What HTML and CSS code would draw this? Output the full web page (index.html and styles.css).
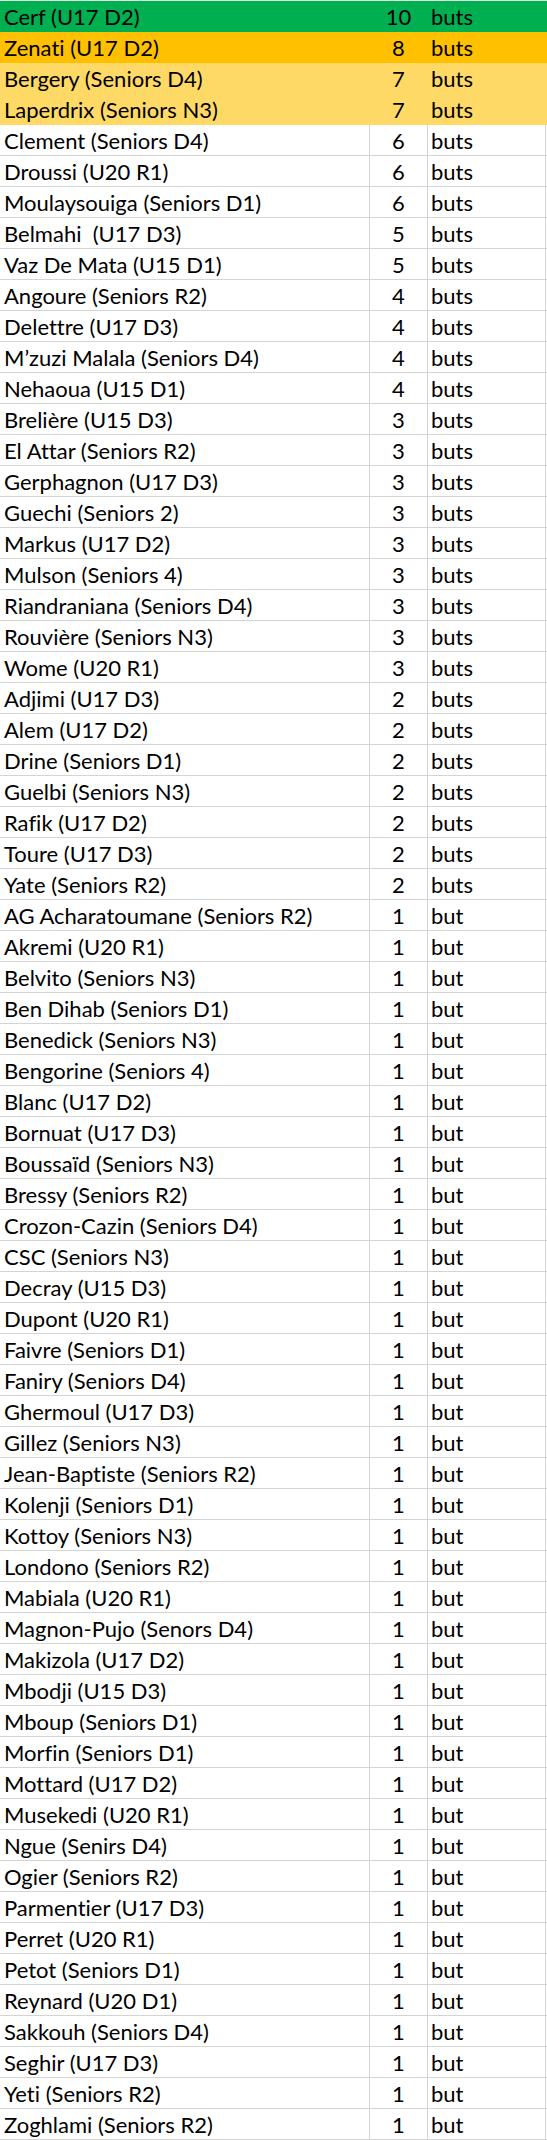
FILE: index.html
```html
<!DOCTYPE html>
<html lang="fr">
<head>
<meta charset="utf-8">
<title>Buteurs</title>
<link rel="stylesheet" href="styles.css">
</head>
<body>
<div class="sheet">
  <div class="row green"><div class="c name">Cerf (U17 D2)</div><div class="c num">10</div><div class="c unit">buts</div><div class="c rest"></div></div>
  <div class="row orange"><div class="c name">Zenati (U17 D2)</div><div class="c num">8</div><div class="c unit">buts</div><div class="c rest"></div></div>
  <div class="row yellow"><div class="c name">Bergery (Seniors D4)</div><div class="c num">7</div><div class="c unit">buts</div><div class="c rest"></div></div>
  <div class="row yellow"><div class="c name">Laperdrix (Seniors N3)</div><div class="c num">7</div><div class="c unit">buts</div><div class="c rest"></div></div>
  <div class="row"><div class="c name">Clement (Seniors D4)</div><div class="c num">6</div><div class="c unit">buts</div><div class="c rest"></div></div>
  <div class="row"><div class="c name">Droussi (U20 R1)</div><div class="c num">6</div><div class="c unit">buts</div><div class="c rest"></div></div>
  <div class="row"><div class="c name">Moulaysouiga (Seniors D1)</div><div class="c num">6</div><div class="c unit">buts</div><div class="c rest"></div></div>
  <div class="row"><div class="c name">Belmahi&nbsp; (U17 D3)</div><div class="c num">5</div><div class="c unit">buts</div><div class="c rest"></div></div>
  <div class="row"><div class="c name">Vaz De Mata (U15 D1)</div><div class="c num">5</div><div class="c unit">buts</div><div class="c rest"></div></div>
  <div class="row"><div class="c name">Angoure (Seniors R2)</div><div class="c num">4</div><div class="c unit">buts</div><div class="c rest"></div></div>
  <div class="row"><div class="c name">Delettre (U17 D3)</div><div class="c num">4</div><div class="c unit">buts</div><div class="c rest"></div></div>
  <div class="row"><div class="c name">M’zuzi Malala (Seniors D4)</div><div class="c num">4</div><div class="c unit">buts</div><div class="c rest"></div></div>
  <div class="row"><div class="c name">Nehaoua (U15 D1)</div><div class="c num">4</div><div class="c unit">buts</div><div class="c rest"></div></div>
  <div class="row"><div class="c name">Brelière (U15 D3)</div><div class="c num">3</div><div class="c unit">buts</div><div class="c rest"></div></div>
  <div class="row"><div class="c name">El Attar (Seniors R2)</div><div class="c num">3</div><div class="c unit">buts</div><div class="c rest"></div></div>
  <div class="row"><div class="c name">Gerphagnon (U17 D3)</div><div class="c num">3</div><div class="c unit">buts</div><div class="c rest"></div></div>
  <div class="row"><div class="c name">Guechi (Seniors 2)</div><div class="c num">3</div><div class="c unit">buts</div><div class="c rest"></div></div>
  <div class="row"><div class="c name">Markus (U17 D2)</div><div class="c num">3</div><div class="c unit">buts</div><div class="c rest"></div></div>
  <div class="row"><div class="c name">Mulson (Seniors 4)</div><div class="c num">3</div><div class="c unit">buts</div><div class="c rest"></div></div>
  <div class="row"><div class="c name">Riandraniana (Seniors D4)</div><div class="c num">3</div><div class="c unit">buts</div><div class="c rest"></div></div>
  <div class="row"><div class="c name">Rouvière (Seniors N3)</div><div class="c num">3</div><div class="c unit">buts</div><div class="c rest"></div></div>
  <div class="row"><div class="c name">Wome (U20 R1)</div><div class="c num">3</div><div class="c unit">buts</div><div class="c rest"></div></div>
  <div class="row"><div class="c name">Adjimi (U17 D3)</div><div class="c num">2</div><div class="c unit">buts</div><div class="c rest"></div></div>
  <div class="row"><div class="c name">Alem (U17 D2)</div><div class="c num">2</div><div class="c unit">buts</div><div class="c rest"></div></div>
  <div class="row"><div class="c name">Drine (Seniors D1)</div><div class="c num">2</div><div class="c unit">buts</div><div class="c rest"></div></div>
  <div class="row"><div class="c name">Guelbi (Seniors N3)</div><div class="c num">2</div><div class="c unit">buts</div><div class="c rest"></div></div>
  <div class="row"><div class="c name">Rafik (U17 D2)</div><div class="c num">2</div><div class="c unit">buts</div><div class="c rest"></div></div>
  <div class="row"><div class="c name">Toure (U17 D3)</div><div class="c num">2</div><div class="c unit">buts</div><div class="c rest"></div></div>
  <div class="row"><div class="c name">Yate (Seniors R2)</div><div class="c num">2</div><div class="c unit">buts</div><div class="c rest"></div></div>
  <div class="row"><div class="c name">AG Acharatoumane (Seniors R2)</div><div class="c num">1</div><div class="c unit">but</div><div class="c rest"></div></div>
  <div class="row"><div class="c name">Akremi (U20 R1)</div><div class="c num">1</div><div class="c unit">but</div><div class="c rest"></div></div>
  <div class="row"><div class="c name">Belvito (Seniors N3)</div><div class="c num">1</div><div class="c unit">but</div><div class="c rest"></div></div>
  <div class="row"><div class="c name">Ben Dihab (Seniors D1)</div><div class="c num">1</div><div class="c unit">but</div><div class="c rest"></div></div>
  <div class="row"><div class="c name">Benedick (Seniors N3)</div><div class="c num">1</div><div class="c unit">but</div><div class="c rest"></div></div>
  <div class="row"><div class="c name">Bengorine (Seniors 4)</div><div class="c num">1</div><div class="c unit">but</div><div class="c rest"></div></div>
  <div class="row"><div class="c name">Blanc (U17 D2)</div><div class="c num">1</div><div class="c unit">but</div><div class="c rest"></div></div>
  <div class="row"><div class="c name">Bornuat (U17 D3)</div><div class="c num">1</div><div class="c unit">but</div><div class="c rest"></div></div>
  <div class="row"><div class="c name">Boussaïd (Seniors N3)</div><div class="c num">1</div><div class="c unit">but</div><div class="c rest"></div></div>
  <div class="row"><div class="c name">Bressy (Seniors R2)</div><div class="c num">1</div><div class="c unit">but</div><div class="c rest"></div></div>
  <div class="row"><div class="c name">Crozon-Cazin (Seniors D4)</div><div class="c num">1</div><div class="c unit">but</div><div class="c rest"></div></div>
  <div class="row"><div class="c name">CSC (Seniors N3)</div><div class="c num">1</div><div class="c unit">but</div><div class="c rest"></div></div>
  <div class="row"><div class="c name">Decray (U15 D3)</div><div class="c num">1</div><div class="c unit">but</div><div class="c rest"></div></div>
  <div class="row"><div class="c name">Dupont (U20 R1)</div><div class="c num">1</div><div class="c unit">but</div><div class="c rest"></div></div>
  <div class="row"><div class="c name">Faivre (Seniors D1)</div><div class="c num">1</div><div class="c unit">but</div><div class="c rest"></div></div>
  <div class="row"><div class="c name">Faniry (Seniors D4)</div><div class="c num">1</div><div class="c unit">but</div><div class="c rest"></div></div>
  <div class="row"><div class="c name">Ghermoul (U17 D3)</div><div class="c num">1</div><div class="c unit">but</div><div class="c rest"></div></div>
  <div class="row"><div class="c name">Gillez (Seniors N3)</div><div class="c num">1</div><div class="c unit">but</div><div class="c rest"></div></div>
  <div class="row"><div class="c name">Jean-Baptiste (Seniors R2)</div><div class="c num">1</div><div class="c unit">but</div><div class="c rest"></div></div>
  <div class="row"><div class="c name">Kolenji (Seniors D1)</div><div class="c num">1</div><div class="c unit">but</div><div class="c rest"></div></div>
  <div class="row"><div class="c name">Kottoy (Seniors N3)</div><div class="c num">1</div><div class="c unit">but</div><div class="c rest"></div></div>
  <div class="row"><div class="c name">Londono (Seniors R2)</div><div class="c num">1</div><div class="c unit">but</div><div class="c rest"></div></div>
  <div class="row"><div class="c name">Mabiala (U20 R1)</div><div class="c num">1</div><div class="c unit">but</div><div class="c rest"></div></div>
  <div class="row"><div class="c name">Magnon-Pujo (Senors D4)</div><div class="c num">1</div><div class="c unit">but</div><div class="c rest"></div></div>
  <div class="row"><div class="c name">Makizola (U17 D2)</div><div class="c num">1</div><div class="c unit">but</div><div class="c rest"></div></div>
  <div class="row"><div class="c name">Mbodji (U15 D3)</div><div class="c num">1</div><div class="c unit">but</div><div class="c rest"></div></div>
  <div class="row"><div class="c name">Mboup (Seniors D1)</div><div class="c num">1</div><div class="c unit">but</div><div class="c rest"></div></div>
  <div class="row"><div class="c name">Morfin (Seniors D1)</div><div class="c num">1</div><div class="c unit">but</div><div class="c rest"></div></div>
  <div class="row"><div class="c name">Mottard (U17 D2)</div><div class="c num">1</div><div class="c unit">but</div><div class="c rest"></div></div>
  <div class="row"><div class="c name">Musekedi (U20 R1)</div><div class="c num">1</div><div class="c unit">but</div><div class="c rest"></div></div>
  <div class="row"><div class="c name">Ngue (Senirs D4)</div><div class="c num">1</div><div class="c unit">but</div><div class="c rest"></div></div>
  <div class="row"><div class="c name">Ogier (Seniors R2)</div><div class="c num">1</div><div class="c unit">but</div><div class="c rest"></div></div>
  <div class="row"><div class="c name">Parmentier (U17 D3)</div><div class="c num">1</div><div class="c unit">but</div><div class="c rest"></div></div>
  <div class="row"><div class="c name">Perret (U20 R1)</div><div class="c num">1</div><div class="c unit">but</div><div class="c rest"></div></div>
  <div class="row"><div class="c name">Petot (Seniors D1)</div><div class="c num">1</div><div class="c unit">but</div><div class="c rest"></div></div>
  <div class="row"><div class="c name">Reynard (U20 D1)</div><div class="c num">1</div><div class="c unit">but</div><div class="c rest"></div></div>
  <div class="row"><div class="c name">Sakkouh (Seniors D4)</div><div class="c num">1</div><div class="c unit">but</div><div class="c rest"></div></div>
  <div class="row"><div class="c name">Seghir (U17 D3)</div><div class="c num">1</div><div class="c unit">but</div><div class="c rest"></div></div>
  <div class="row"><div class="c name">Yeti (Seniors R2)</div><div class="c num">1</div><div class="c unit">but</div><div class="c rest"></div></div>
  <div class="row"><div class="c name">Zoghlami (Seniors R2)</div><div class="c num">1</div><div class="c unit">but</div><div class="c rest"></div></div>
</div>
</body>
</html>
```

FILE: styles.css
```css
html, body {
  margin: 0;
  padding: 0;
  background: #ffffff;
}

body {
  font-family: "Lato", "Open Sans", "Liberation Sans", sans-serif;
  font-size: 22px;
  font-variant-ligatures: none;
  color: #000000;
  overflow: hidden;
}

.sheet {
  border-top: 1px solid #e2e2e2;
  width: 100%;
}

.row {
  display: grid;
  grid-template-columns: 370px 58px 118px 1fr;
  height: 31px;
}

.c {
  box-sizing: border-box;
  height: 31px;
  border-bottom: 1px solid #d4d4d4;
  border-right: 1px solid #d4d4d4;
  display: flex;
  align-items: flex-end;
  padding-bottom: 2px;
  line-height: 24px;
  white-space: nowrap;
  overflow: hidden;
}

.name {
  padding-left: 4px;
}

.num {
  justify-content: center;
}

.unit {
  padding-left: 3px;
}

.rest {
  border-right: none;
}

.green .c {
  background: #00b050;
  border-color: #00b050;
}

.orange .c {
  background: #ffc000;
  border-color: #ffc000;
}

.yellow .c {
  background: #ffd966;
  border-color: #ffd966;
}
```
